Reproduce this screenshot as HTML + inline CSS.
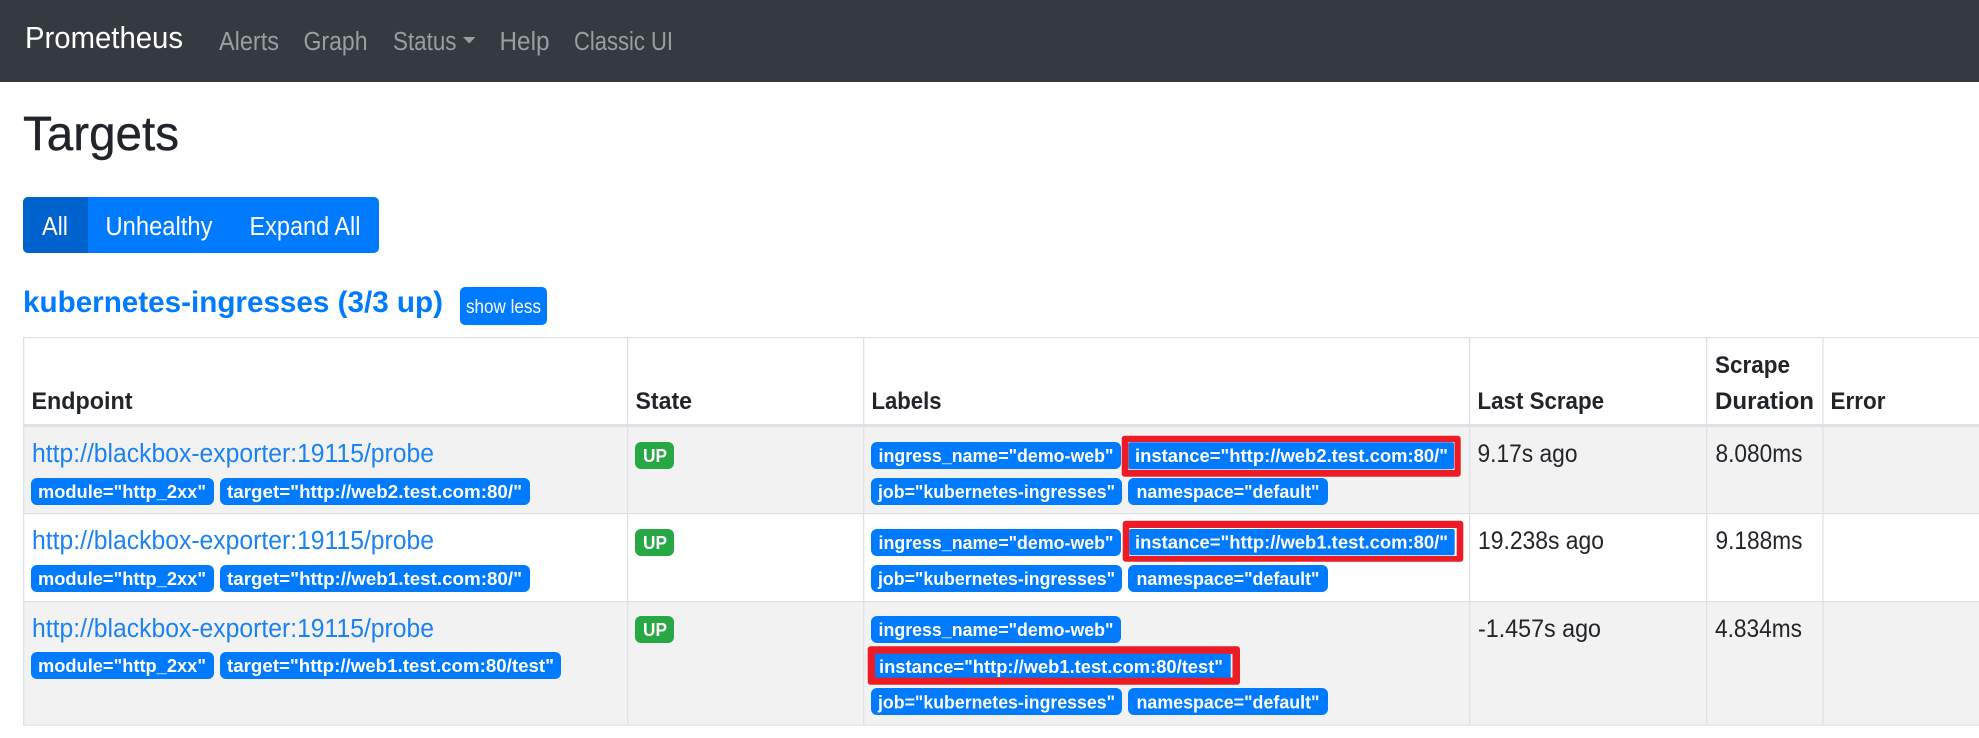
<!DOCTYPE html>
<html lang="en">
<head>
<meta charset="utf-8">
<title>Prometheus Targets</title>
<style>
html,body{margin:0;padding:0;background:#fff;width:1979px;height:738px;overflow:hidden}
svg{display:block}
text{font-family:"Liberation Sans",sans-serif;white-space:pre}
.nav{font-size:25.5px;fill:#9b9da0}
.btn{font-size:25.5px;fill:#fff}
.th{font-size:24.5px;font-weight:700;fill:#212529}
.td{font-size:25px;fill:#212529}
.lnk{font-size:25.5px;fill:#1a82f5}
.b{font-size:18.5px;font-weight:700;fill:#fff}
.blue{fill:#007bff}
.red{fill:#ed1c24}
.line{fill:#dee2e6}
</style>
</head>
<body>
<svg xmlns="http://www.w3.org/2000/svg" width="1979" height="738" viewBox="0 0 1979 738">
<rect width="1979" height="738" fill="#fff"/>
<!-- navbar -->
<rect width="1979" height="82" fill="#343a40"/>
<text x="25" y="48" font-size="30.5" fill="#fff" textLength="158" lengthAdjust="spacingAndGlyphs">Prometheus</text>
<text class="nav" x="219" y="50" textLength="60" lengthAdjust="spacingAndGlyphs">Alerts</text>
<text class="nav" x="303.5" y="50" textLength="64" lengthAdjust="spacingAndGlyphs">Graph</text>
<text class="nav" x="393" y="50" textLength="63.5" lengthAdjust="spacingAndGlyphs">Status</text>
<path d="M463 37h12.5l-6.25 6.5z" fill="#9b9da0"/>
<text class="nav" x="499.5" y="50" textLength="50" lengthAdjust="spacingAndGlyphs">Help</text>
<text class="nav" x="574" y="50" textLength="99" lengthAdjust="spacingAndGlyphs">Classic UI</text>
<!-- title -->
<text x="23" y="150" font-size="48" fill="#212529" stroke="#212529" stroke-width=".4" textLength="156" lengthAdjust="spacingAndGlyphs">Targets</text>
<!-- button group -->
<rect x="23" y="197" width="356" height="56" rx="5" fill="#007bff"/>
<path d="M88 197H28a5 5 0 0 0-5 5v46a5 5 0 0 0 5 5h60z" fill="#0062cc"/>
<text class="btn" x="42" y="235" textLength="26" lengthAdjust="spacingAndGlyphs">All</text>
<text class="btn" x="105.5" y="235" textLength="107" lengthAdjust="spacingAndGlyphs">Unhealthy</text>
<text class="btn" x="249.5" y="235" textLength="111" lengthAdjust="spacingAndGlyphs">Expand All</text>
<!-- pool heading -->
<text x="23" y="312" font-size="30" font-weight="700" fill="#007bff" textLength="420" lengthAdjust="spacingAndGlyphs">kubernetes-ingresses (3/3 up)</text>
<rect x="460" y="287" width="87" height="38" rx="5" fill="#007bff"/>
<text x="466" y="313" font-size="19.5" fill="#fff" textLength="75" lengthAdjust="spacingAndGlyphs">show less</text>
<!-- table stripes -->
<rect x="23" y="427" width="1956" height="86" fill="#f2f2f2"/>
<rect x="23" y="601" width="1956" height="124" fill="#f2f2f2"/>
<!-- table lines -->
<rect class="line" x="23" y="337" width="1956" height="1.3"/>
<rect class="line" x="23" y="424" width="1956" height="3"/>
<rect class="line" x="23" y="513" width="1956" height="1.3"/>
<rect class="line" x="23" y="601" width="1956" height="1.3"/>
<rect class="line" x="23" y="724.5" width="1956" height="1.3"/>
<rect class="line" x="23" y="337" width="1.3" height="388"/>
<rect class="line" x="627" y="337" width="1.3" height="388"/>
<rect class="line" x="863" y="337" width="1.3" height="388"/>
<rect class="line" x="1469" y="337" width="1.3" height="388"/>
<rect class="line" x="1706" y="337" width="1.3" height="388"/>
<rect class="line" x="1822.3" y="337" width="1.3" height="388"/>
<!-- headers -->
<text class="th" x="31.5" y="409" textLength="101" lengthAdjust="spacingAndGlyphs">Endpoint</text>
<text class="th" x="635.5" y="409" textLength="56.5" lengthAdjust="spacingAndGlyphs">State</text>
<text class="th" x="871.5" y="409" textLength="70" lengthAdjust="spacingAndGlyphs">Labels</text>
<text class="th" x="1477.5" y="409" textLength="126.5" lengthAdjust="spacingAndGlyphs">Last Scrape</text>
<text class="th" x="1715" y="373" textLength="75" lengthAdjust="spacingAndGlyphs">Scrape</text>
<text class="th" x="1715" y="409" textLength="99" lengthAdjust="spacingAndGlyphs">Duration</text>
<text class="th" x="1830.5" y="409" textLength="55" lengthAdjust="spacingAndGlyphs">Error</text>

<!-- row 1 -->
<text class="lnk" x="32" y="462" textLength="402" lengthAdjust="spacingAndGlyphs">http://blackbox-exporter:19115/probe</text>
<rect class="blue" x="31" y="478" width="183" height="27" rx="6"/>
<text class="b" x="38" y="498" textLength="168" lengthAdjust="spacingAndGlyphs">module="http_2xx"</text>
<rect class="blue" x="220" y="478" width="310" height="27" rx="6"/>
<text class="b" x="227" y="498" textLength="295" lengthAdjust="spacingAndGlyphs">target="http://web2.test.com:80/"</text>
<rect x="635" y="442" width="39" height="27" rx="6" fill="#28a745"/>
<text class="b" x="643" y="462" textLength="24" lengthAdjust="spacingAndGlyphs">UP</text>
<rect class="blue" x="871" y="442" width="250" height="27" rx="6"/>
<text class="b" x="878.5" y="462" textLength="235" lengthAdjust="spacingAndGlyphs">ingress_name="demo-web"</text>
<rect class="red" x="1121.7" y="435.7" width="339" height="41" rx="3"/>
<rect x="1128.5" y="442" width="326" height="28" fill="#f2f2f2"/>
<rect class="blue" x="1128.7" y="442.3" width="325.3" height="27" rx="2"/>
<text class="b" x="1135" y="462" textLength="313" lengthAdjust="spacingAndGlyphs">instance="http://web2.test.com:80/"</text>
<rect class="blue" x="871" y="478" width="251" height="27" rx="6"/>
<text class="b" x="878" y="498" textLength="237" lengthAdjust="spacingAndGlyphs">job="kubernetes-ingresses"</text>
<rect class="blue" x="1128" y="478" width="200" height="27" rx="6"/>
<text class="b" x="1136.5" y="498" textLength="183" lengthAdjust="spacingAndGlyphs">namespace="default"</text>
<text class="td" x="1477.5" y="462" textLength="100" lengthAdjust="spacingAndGlyphs">9.17s ago</text>
<text class="td" x="1715.5" y="462" textLength="87" lengthAdjust="spacingAndGlyphs">8.080ms</text>

<!-- row 2 -->
<text class="lnk" x="32" y="549" textLength="402" lengthAdjust="spacingAndGlyphs">http://blackbox-exporter:19115/probe</text>
<rect class="blue" x="31" y="565" width="183" height="27" rx="6"/>
<text class="b" x="38" y="585" textLength="168" lengthAdjust="spacingAndGlyphs">module="http_2xx"</text>
<rect class="blue" x="220" y="565" width="310" height="27" rx="6"/>
<text class="b" x="227" y="585" textLength="295" lengthAdjust="spacingAndGlyphs">target="http://web1.test.com:80/"</text>
<rect x="635" y="529" width="39" height="27" rx="6" fill="#28a745"/>
<text class="b" x="643" y="549" textLength="24" lengthAdjust="spacingAndGlyphs">UP</text>
<rect class="blue" x="871" y="529" width="250" height="27" rx="6"/>
<text class="b" x="878.5" y="549" textLength="235" lengthAdjust="spacingAndGlyphs">ingress_name="demo-web"</text>
<rect class="red" x="1122.7" y="520.7" width="340.6" height="41" rx="3"/>
<rect x="1129.3" y="528" width="327.4" height="28" fill="#fff"/>
<rect class="blue" x="1129.3" y="529" width="325.4" height="26.3" rx="2"/>
<text class="b" x="1135" y="548.5" textLength="313" lengthAdjust="spacingAndGlyphs">instance="http://web1.test.com:80/"</text>
<rect class="blue" x="871" y="565" width="251" height="27" rx="6"/>
<text class="b" x="878" y="585" textLength="237" lengthAdjust="spacingAndGlyphs">job="kubernetes-ingresses"</text>
<rect class="blue" x="1128" y="565" width="200" height="27" rx="6"/>
<text class="b" x="1136.5" y="585" textLength="183" lengthAdjust="spacingAndGlyphs">namespace="default"</text>
<text class="td" x="1478" y="549" textLength="126" lengthAdjust="spacingAndGlyphs">19.238s ago</text>
<text class="td" x="1715.5" y="549" textLength="87" lengthAdjust="spacingAndGlyphs">9.188ms</text>

<!-- row 3 -->
<text class="lnk" x="32" y="637" textLength="402" lengthAdjust="spacingAndGlyphs">http://blackbox-exporter:19115/probe</text>
<rect class="blue" x="31" y="652" width="183" height="27" rx="6"/>
<text class="b" x="38" y="672" textLength="168" lengthAdjust="spacingAndGlyphs">module="http_2xx"</text>
<rect class="blue" x="220" y="652" width="341" height="27" rx="6"/>
<text class="b" x="227" y="672" textLength="327" lengthAdjust="spacingAndGlyphs">target="http://web1.test.com:80/test"</text>
<rect x="635" y="616" width="39" height="27" rx="6" fill="#28a745"/>
<text class="b" x="643" y="636" textLength="24" lengthAdjust="spacingAndGlyphs">UP</text>
<rect class="blue" x="871" y="616" width="250" height="27" rx="6"/>
<text class="b" x="878.5" y="636" textLength="235" lengthAdjust="spacingAndGlyphs">ingress_name="demo-web"</text>
<rect class="red" x="867.7" y="646.3" width="372.3" height="38.4" rx="3"/>
<rect x="1230" y="654" width="2.5" height="23.5" fill="#e8eef8"/>
<rect class="blue" x="875" y="653.7" width="355.7" height="24"/>
<text class="b" x="879" y="673" textLength="344" lengthAdjust="spacingAndGlyphs">instance="http://web1.test.com:80/test"</text>
<rect class="blue" x="871" y="688" width="251" height="27" rx="6"/>
<text class="b" x="878" y="708.5" textLength="237" lengthAdjust="spacingAndGlyphs">job="kubernetes-ingresses"</text>
<rect class="blue" x="1128" y="688" width="200" height="27" rx="6"/>
<text class="b" x="1136.5" y="708.5" textLength="183" lengthAdjust="spacingAndGlyphs">namespace="default"</text>
<text class="td" x="1478" y="637" textLength="123" lengthAdjust="spacingAndGlyphs">-1.457s ago</text>
<text class="td" x="1715" y="637" textLength="87" lengthAdjust="spacingAndGlyphs">4.834ms</text>
</svg>
</body>
</html>
